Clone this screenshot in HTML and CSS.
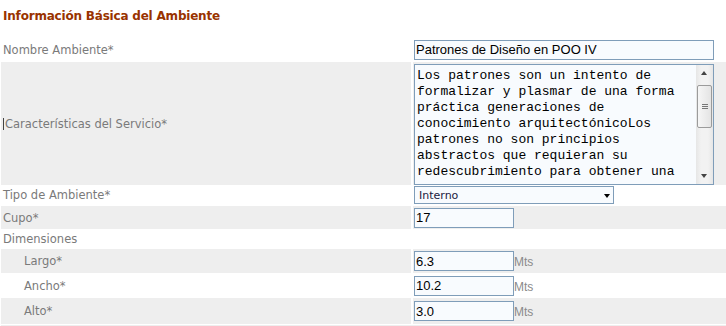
FILE: index.html
```html
<!DOCTYPE html>
<html>
<head>
    <meta charset="UTF-8">
    <title>Ambiente</title>
    <link rel="stylesheet" href="styles.css">
</head>
<body>
    <div class="form">
        <h2 class="section-title">Información Básica del Ambiente</h2>

        <div class="row r-name">
            <label class="label">Nombre Ambiente*</label>
            <div class="field"><input class="text wide" type="text" value="Patrones de Diseño en POO IV"></div>
        </div>

        <div class="row alt r-desc">
            <label class="label"><span class="caret"></span>Características del Servicio*</label>
            <div class="field top">
                <div class="memo">
                    <textarea class="memo-text">Los patrones son un intento de formalizar y plasmar de una forma práctica generaciones de conocimiento arquitectónicoLos patrones no son principios abstractos que requieran su redescubrimiento para obtener una aplicación satisfactoria, ni son específicos de una situación particular o cultural.</textarea>
                    <div class="vscroll">
                        <span class="sb-btn up"></span>
                        <span class="sb-thumb"><span class="grip"></span></span>
                        <span class="sb-space"></span>
                        <span class="sb-btn down"></span>
                    </div>
                </div>
            </div>
        </div>

        <div class="row r-type">
            <label class="label">Tipo de Ambiente*</label>
            <div class="field">
                <div class="select-wrap">
                    <select class="select"><option>Interno</option><option>Externo</option></select>
                </div>
            </div>
        </div>

        <div class="row alt r-cupo">
            <label class="label">Cupo*</label>
            <div class="field"><input class="text short" type="text" value="17"></div>
        </div>

        <div class="row r-group">
            <label class="label">Dimensiones</label>
            <div class="field"></div>
        </div>

        <div class="row alt r-dim">
            <label class="label sub">Largo*</label>
            <div class="field"><input class="text short" type="text" value="6.3"><span class="unit">Mts</span></div>
        </div>

        <div class="row r-dim2">
            <label class="label sub">Ancho*</label>
            <div class="field"><input class="text short" type="text" value="10.2"><span class="unit">Mts</span></div>
        </div>

        <div class="row alt r-dim3">
            <label class="label sub">Alto*</label>
            <div class="field"><input class="text short" type="text" value="3.0"><span class="unit">Mts</span></div>
        </div>

        <div class="row-end"></div>
    </div>
</body>
</html>
```

FILE: styles.css
```css
body {
    margin: 0;
    background-color: #fff;
    font-family: "DejaVu Sans", Verdana, sans-serif;
    font-size: 11.5px;
    color: #7a7a7a;
}
.form {
    padding: 0 0 0 1px;
}
.section-title {
    margin: 0;
    height: 37px;
    box-sizing: border-box;
    padding: 9px 2px 0;
    font-size: 12px;
    font-weight: bold;
    letter-spacing: -0.2px;
    color: #993300;
}
.row {
    display: grid;
    grid-template-columns: 410px 1fr;
    column-gap: 2px;
    align-items: center;
}
.row.alt .label,
.row.alt .field {
    background-color: #eeeeee;
}
.label {
    display: flex;
    align-items: center;
    height: 100%;
    padding-left: 2px;
}
.label.sub {
    padding-left: 23px;
}
.field {
    display: flex;
    align-items: center;
    height: 100%;
    padding-left: 1px;
}
.field.top {
    align-items: flex-start;
}
.r-name { height: 25px; }
.r-desc { height: 121px; }
.r-type { height: 23px; }
.r-cupo { height: 23px; }
.r-group { height: 20px; }
.r-dim { height: 24px; }
.r-dim2 { height: 25px; }
.r-dim3 { height: 26px; }
.row-end {
    height: 2px;
    margin-top: 1px;
    background-color: #eeeeee;
}
.caret {
    display: inline-block;
    width: 1px;
    height: 12px;
    margin-right: 1px;
    background-color: #444;
}
.text {
    box-sizing: border-box;
    height: 20px;
    margin: 0;
    padding: 0 1px;
    border: 1px solid #7f9db9;
    background-color: #f8fbfe;
    font-family: "Liberation Sans", Arial, sans-serif;
    font-size: 13px;
    color: #000;
    outline: none;
}
.text.wide {
    width: 300px;
}
.text.short {
    width: 100px;
}
.unit {
    font-family: "Liberation Sans", Arial, sans-serif;
    font-size: 12px;
    color: #8a8a8a;
    padding-top: 2px;
}
.memo {
    display: flex;
    align-items: flex-start;
    box-sizing: border-box;
    width: 300px;
    height: 121px;
    margin-top: 2px;
    border: 1px solid #7f9db9;
    background-color: #f8fbfe;
}
.memo-text {
    flex: 1;
    box-sizing: border-box;
    height: 115px;
    margin: 0;
    padding: 3px 2px 0;
    border: 0;
    background: transparent;
    resize: none;
    overflow: hidden;
    outline: none;
    font-family: "Liberation Mono", "Courier New", monospace;
    font-size: 13px;
    line-height: 16px;
    color: #000;
}
.vscroll {
    display: flex;
    flex-direction: column;
    align-self: stretch;
    width: 17px;
    background: linear-gradient(to right, #e6e6e6, #f2f2f2 30%, #f2f2f2 70%, #e6e6e6);
}
.sb-btn {
    position: relative;
    height: 17px;
}
.sb-btn::after {
    content: "";
    position: absolute;
    left: 5px;
    width: 0;
    height: 0;
    border-left: 3.5px solid transparent;
    border-right: 3.5px solid transparent;
}
.sb-btn.up::after {
    top: 6px;
    border-bottom: 4px solid #444;
}
.sb-btn.down::after {
    top: 7px;
    border-top: 4px solid #444;
}
.sb-thumb {
    display: flex;
    align-items: center;
    justify-content: center;
    box-sizing: border-box;
    height: 43px;
    margin: 3px 1px 0;
    border: 1px solid #9b9b9b;
    border-radius: 2px;
    background: linear-gradient(to right, #f6f6f6, #e4e4e4);
}
.grip {
    width: 6px;
    height: 5px;
    background: repeating-linear-gradient(to bottom, #777 0, #777 1px, transparent 1px, transparent 2px);
}
.sb-space {
    flex: 1;
}
.select-wrap {
    position: relative;
    width: 200px;
    height: 18px;
    margin-top: 1px;
}
.select {
    box-sizing: border-box;
    width: 100%;
    height: 100%;
    margin: 0;
    padding: 0 0 0 4px;
    border: 1px solid #7f9db9;
    border-radius: 0;
    background-color: #f8fbfe;
    font-family: "DejaVu Sans", Verdana, sans-serif;
    font-size: 11px;
    color: #1a1a40;
    appearance: none;
    -webkit-appearance: none;
    outline: none;
}
.select-wrap::after {
    content: "";
    position: absolute;
    right: 4px;
    top: 8px;
    border-left: 3.5px solid transparent;
    border-right: 3.5px solid transparent;
    border-top: 4px solid #000;
    pointer-events: none;
}
```
